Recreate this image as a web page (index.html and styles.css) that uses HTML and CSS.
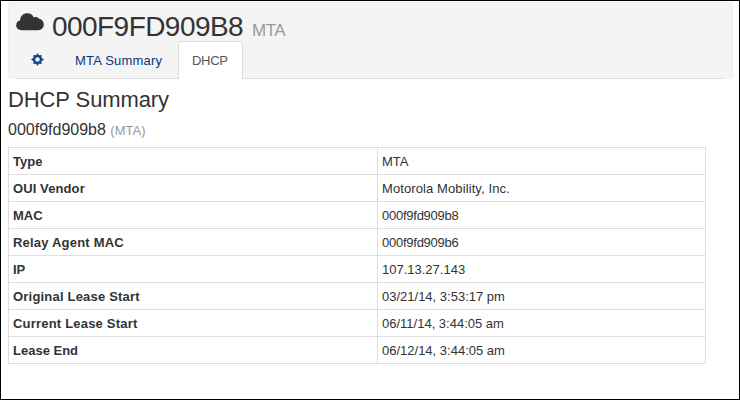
FILE: index.html
```html
<!DOCTYPE html>
<html lang="en">
<head>
<meta charset="utf-8">
<title>DHCP Summary</title>
<link rel="stylesheet" href="styles.css">
</head>
<body>
<div class="frame">
  <header class="header">
    <h1 class="title">
      <svg class="cloud" viewBox="0 0 28 18" width="28" height="18"><path d="M5.500 17.200C2.200 17.200.2 15.200.2 12.300c0-2.500 1.500-4.300 4-5C4.200 3 7.400.3 11.500.3c3 0 5 1.500 6.100 4.100 2.500-1 4.800-.2 5.300 1.400 2.900.3 4.900 2.900 4.900 5.700 0 3.300-2.400 5.700-5.600 5.700z"/></svg>
      <span class="device">000F9FD909B8</span>
      <small class="kind">MTA</small>
    </h1>
    <nav class="tabs">
      <a class="tab tab-icon"><svg class="gear" viewBox="0 0 13 13" width="13" height="13"><path fill-rule="evenodd" d="M6.500 0l1.400 2.200 2.700-.1-.1 2.700L13 6.500l-2.500 1.700.1 2.700-2.700-.1L6.500 13l-1.400-2.200-2.700.1.1-2.700L0 6.500l2.500-1.700-.1-2.700 2.700.1zM6.500 4.200a2.300 2.300 0 1 0 0 4.600 2.300 2.300 0 0 0 0-4.600z"/></svg></a>
      <a class="tab tab-summary">MTA Summary</a>
      <a class="tab tab-active">DHCP</a>
    </nav>
  </header>
  <main class="content">
    <h2 class="heading">DHCP Summary</h2>
    <h3 class="subheading">000f9fd909b8 <small>(MTA)</small></h3>
    <table class="details">
      <tr><th>Type</th><td>MTA</td></tr>
      <tr><th class="vendor">OUI Vendor</th><td class="vendor">Motorola Mobility, Inc.</td></tr>
      <tr><th>MAC</th><td class="compact">000f9fd909b8</td></tr>
      <tr><th class="wide">Relay Agent MAC</th><td class="compact">000f9fd909b6</td></tr>
      <tr><th>IP</th><td>107.13.27.143</td></tr>
      <tr><th class="wide">Original Lease Start</th><td>03/21/14, 3:53:17 pm</td></tr>
      <tr><th class="wide">Current Lease Start</th><td>06/11/14, 3:44:05 am</td></tr>
      <tr><th>Lease End</th><td>06/12/14, 3:44:05 am</td></tr>
    </table>
  </main>
</div>
</body>
</html>
```
FILE: styles.css
```css
* { box-sizing: border-box; }
body { margin: 0; font-family: "Liberation Sans", Arial, sans-serif; font-size: 13px; color: #333; background: #fff; }
.frame { width: 740px; height: 400px; border: 1px solid #000; padding: 1px 6px 0 7px; overflow: hidden; }
.header { height: 77px; background: #f4f4f4; padding-right: 9px; border: 1px solid #efefef; border-bottom: 0; border-radius: 2px; }
.title { display: flex; align-items: baseline; margin: 0; height: 38px; padding: 7px 0 0 8px; font-size: 28px; line-height: 34px; font-weight: 400; }
.cloud { align-self: flex-start; margin: 3px 7px 0 -1px; fill: #333; }
.device { margin-left: 1px; letter-spacing: -0.55px; }
.kind { font-size: 17px; letter-spacing: -0.6px; color: #999; margin-left: 9px; }
.tabs { display: flex; margin-left: 8px; height: 38px; border-bottom: 1px solid #ddd; }
.tab { height: 38px; line-height: 40px; color: #08397f; }
.tab-icon { padding: 12px 0 0 14px; width: 58px; line-height: 0; }
.gear { fill: #0b4596; }
.tab-summary { width: 103px; letter-spacing: 0.2px; }
.tab-active { width: 65px; padding-left: 13px; line-height: 37px; color: #555; letter-spacing: -0.3px; background: #fff; border: 1px solid #ddd; border-bottom: 0; border-radius: 4px 4px 0 0; }
.heading { margin: 7px 0 0; font-size: 22px; line-height: 28px; font-weight: 400; letter-spacing: -0.1px; }
.subheading { margin: 6px 0 6px; font-size: 16px; line-height: 20px; font-weight: 400; }
.subheading small { font-size: 13px; color: #999; }
.details { width: 698px; border-collapse: collapse; table-layout: fixed; }
.details th, .details td { height: 27px; padding: 2px 4px 0; border: 1px solid #ddd; text-align: left; line-height: 18px; }
.details th { width: 369px; }
.details th.wide { letter-spacing: 0.2px; }
.details .vendor { letter-spacing: 0.1px; }
.details .compact { letter-spacing: -0.25px; }
```
